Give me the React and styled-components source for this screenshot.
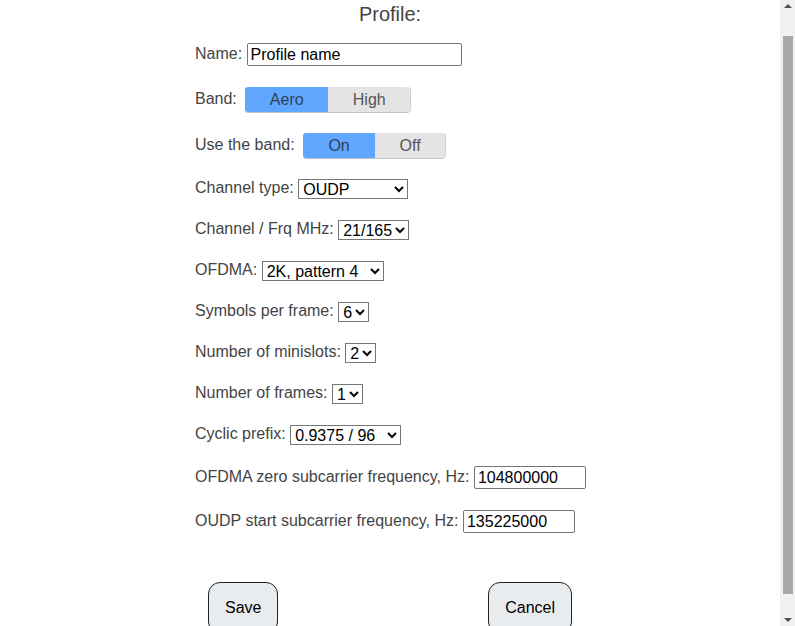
import styled, { createGlobalStyle } from 'styled-components';

const GlobalStyle = createGlobalStyle`
  body {
    margin: 0;
    font-family: "Liberation Sans", Arial, sans-serif;
    color: #444;
    background: #fff;
  }
`;

// band / on-off toggles
const BAND = [
  { label: 'Aero', width: 83 },
  { label: 'High', width: 82 },
];
const USE_BAND = [
  { label: 'On', width: 72 },
  { label: 'Off', width: 70 },
];

function Toggle({ items, active }) {
  return (
    <StToggle>
      {items.map((it, i) => (
        <StToggleItem key={it.label} $active={i === active} $w={it.width}>
          {it.label}
        </StToggleItem>
      ))}
    </StToggle>
  );
}

function Select({ value, options, width }) {
  return (
    <StSelect defaultValue={value} $w={width}>
      {options.map((o) => (
        <option key={o}>{o}</option>
      ))}
    </StSelect>
  );
}

// page scrollbar as it was photographed
function Scrollbar() {
  return (
    <StScrollbar>
      <StArrow $up />
      <StTrack>
        <StThumb />
      </StTrack>
      <StArrow />
    </StScrollbar>
  );
}

export default function App() {
  return (
    <>
      <GlobalStyle />
      <StPage>
        <StTitle>Profile:</StTitle>
        <StForm>
          <StRow>
            Name: <StText $w={215} defaultValue="Profile name" />
          </StRow>
          <StRow>
            Band: <Toggle items={BAND} active={0} />
          </StRow>
          <StRow>
            Use the band: <Toggle items={USE_BAND} active={0} />
          </StRow>
          <StRow>
            Channel type: <Select width={110} value="OUDP" options={['OUDP', 'OFDMA']} />
          </StRow>
          <StRow>
            Channel / Frq MHz: <Select value="21/165" options={['21/165', '22/173', '23/181']} />
          </StRow>
          <StRow>
            OFDMA: <Select width={122} value="2K, pattern 4" options={['2K, pattern 4', '4K, pattern 1']} />
          </StRow>
          <StRow>
            Symbols per frame: <Select value="6" options={['6', '7', '8']} />
          </StRow>
          <StRow>
            Number of minislots: <Select value="2" options={['1', '2', '3']} />
          </StRow>
          <StRow>
            Number of frames: <Select value="1" options={['1', '2', '3']} />
          </StRow>
          <StRow>
            Cyclic prefix: <Select width={111} value="0.9375 / 96" options={['0.9375 / 96', '1.875 / 192']} />
          </StRow>
          <StRow>
            OFDMA zero subcarrier frequency, Hz: <StText $w={112} defaultValue="104800000" />
          </StRow>
          <StRow>
            OUDP start subcarrier frequency, Hz: <StText $w={112} defaultValue="135225000" />
          </StRow>
          <StButtons>
            <StButton>Save</StButton>
            <StButton>Cancel</StButton>
          </StButtons>
        </StForm>
      </StPage>
      <Scrollbar />
    </>
  );
}

const StPage = styled.div`
  width: calc(100% - 15px);
  padding-top: 3px;
  padding-bottom: 40px;
`;

const StTitle = styled.div`
  font-size: 20px;
  line-height: 23px;
  text-align: center;
  color: #444;
  margin-bottom: 17px;
`;

const StForm = styled.div`
  width: 50%;
  margin: 0 auto;
  display: flex;
  flex-direction: column;
  gap: 21px;
`;

const StRow = styled.div`
  display: block;
  font-size: 16px;
  line-height: 18px;
  white-space: pre;
`;

const StText = styled.input`
  box-sizing: border-box;
  width: ${(p) => p.$w}px;
  height: 23px;
  vertical-align: middle;
  font-family: "Liberation Sans", Arial, sans-serif;
  font-size: 16px;
  color: #000;
  padding: 1px 3px;
  margin: 0;
  border: 1px solid #767676;
  border-radius: 2px;
`;

const StSelect = styled.select`
  box-sizing: border-box;
  width: ${(p) => (p.$w ? `${p.$w}px` : 'auto')};
  height: 20px;
  vertical-align: middle;
  font-family: "Liberation Sans", Arial, sans-serif;
  font-size: 16px;
  color: #000;
  margin: 0;
  padding: 0;
  border: 1px solid #767676;
  border-radius: 0;
  background: #fff;
`;

const StToggle = styled.span`
  display: inline-flex;
  vertical-align: middle;
  margin-left: 4px;
  height: 25px;
  border-radius: 3px;
  overflow: hidden;
  box-shadow: 0 1px 0 #c4c4c4, 1px 0 0 #d0d0d0;
`;

const StToggleItem = styled.span`
  box-sizing: border-box;
  width: ${(p) => p.$w}px;
  display: flex;
  align-items: center;
  justify-content: center;
  font-size: 16px;
  background: ${(p) => (p.$active ? '#5ea6fe' : '#e4e4e4')};
  color: ${(p) => (p.$active ? '#334055' : '#555')};
  cursor: pointer;
`;

const StButtons = styled.div`
  display: flex;
  justify-content: space-between;
  padding: 0 13px;
  margin-top: 28px;
`;

const StButton = styled.button`
  font-family: "Liberation Sans", Arial, sans-serif;
  font-size: 16px;
  line-height: 18px;
  color: #000;
  background: #e9ecef;
  border: 1px solid #222;
  border-radius: 12px;
  padding: 16px 16px;
  cursor: pointer;
`;

const StScrollbar = styled.div`
  position: fixed;
  top: 0;
  right: 0;
  width: 15px;
  height: 100vh;
  background: #f1f1f1;
  display: flex;
  flex-direction: column;
  align-items: center;
`;

const StArrow = styled.div`
  flex: none;
  width: 0;
  height: 0;
  margin: ${(p) => (p.$up ? '4px 0 0' : '0 0 4px')};
  border-left: 4px solid transparent;
  border-right: 4px solid transparent;
  ${(p) =>
    p.$up ? 'border-bottom: 4px solid #505050;' : 'border-top: 4px solid #505050;'}
`;

const StTrack = styled.div`
  flex: 1;
  align-self: stretch;
  padding: 28px 2px 24px 3px;
  display: flex;
`;

const StThumb = styled.div`
  flex: 1;
  background: #a8a8a8;
`;
